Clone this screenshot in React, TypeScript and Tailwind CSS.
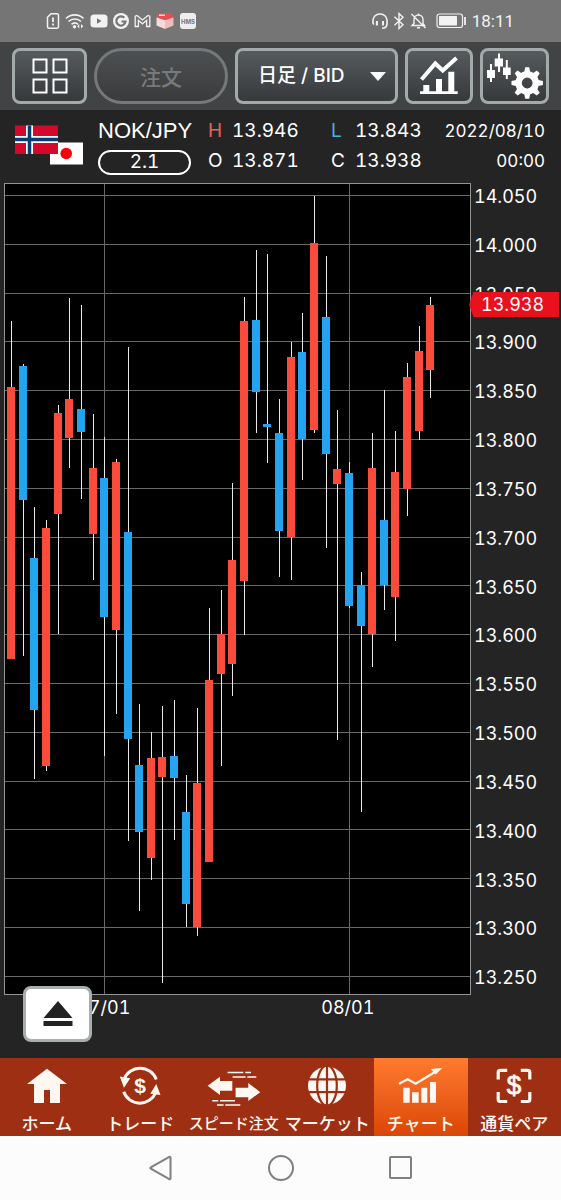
import type { ReactNode } from "react";

type Candle = [kind: "up" | "down", high: number, top: number, bottom: number, low: number];

const CANDLES: Candle[] = [
  ["up", 321, 387, 659, 659],
  ["down", 364, 366, 500, 656],
  ["down", 507, 558, 710, 779],
  ["up", 520, 528, 766, 771],
  ["up", 405, 413, 514, 634],
  ["up", 298, 399, 438, 468],
  ["down", 305, 409, 432, 499],
  ["up", 414, 468, 534, 580],
  ["down", 437, 478, 617, 756],
  ["up", 459, 462, 630, 714],
  ["down", 347, 532, 739, 841],
  ["down", 704, 765, 832, 911],
  ["up", 732, 758, 858, 880],
  ["up", 706, 757, 777, 983],
  ["down", 700, 756, 778, 840],
  ["down", 775, 812, 904, 927],
  ["up", 708, 783, 927, 936],
  ["up", 608, 680, 862, 862],
  ["up", 590, 634, 674, 766],
  ["up", 483, 560, 664, 696],
  ["up", 297, 321, 581, 635],
  ["down", 250, 320, 392, 433],
  ["down", 254, 424, 427, 463],
  ["down", 399, 433, 531, 577],
  ["up", 342, 357, 537, 580],
  ["down", 313, 352, 439, 480],
  ["up", 196, 243, 430, 433],
  ["down", 256, 317, 454, 548],
  ["up", 410, 469, 484, 740],
  ["down", 462, 473, 606, 608],
  ["down", 572, 585, 626, 812],
  ["up", 433, 468, 634, 667],
  ["down", 390, 520, 585, 610],
  ["up", 431, 472, 597, 641],
  ["up", 363, 377, 489, 516],
  ["up", 326, 351, 431, 440],
  ["up", 297, 305, 370, 398],
];

const PRICES = Array.from({ length: 17 }, (_, i) => (14.05 - i * 0.05).toFixed(3));

function StatusBar() {
  return (
    <div className="flex h-[42px] items-center justify-between bg-[#757575] pl-[46px] pr-[47px] text-[#f2f2f2]">
      <div className="flex items-center gap-[5px]">
        <svg width="14" height="18" viewBox="0 0 14 18" fill="none" stroke="currentColor" strokeWidth="1.5">
          <path d="M5 1.8h6a1.5 1.5 0 0 1 1.500 1.500v11.400a1.500 1.500 0 0 1-1.500 1.500H3a1.500 1.500 0 0 1-1.500-1.500V5.300z" />
          <path d="M7 5.500v4.500M7 11.500v2" strokeWidth="1.800" />
        </svg>
        <svg width="20" height="18" viewBox="0 0 20 18" fill="none" stroke="currentColor" strokeWidth="1.700">
          <path d="M1 6.500a12.500 12.500 0 0 1 17.500 0M3.500 9.500a9 9 0 0 1 12.500 0M6.500 12.300a5 5 0 0 1 6.500 0" />
          <circle cx="9.500" cy="14.800" r="1.700" fill="currentColor" stroke="none" />
          <path d="M14.300 12v4.500l-2-2.200zM16 12v4.500l2.300-2.200z" fill="currentColor" stroke="none" />
        </svg>
        <svg width="18" height="18" viewBox="0 0 18 18">
          <rect x="0.500" y="2.500" width="17" height="13" rx="3.500" fill="currentColor" />
          <path d="M7 6.300v5.400L11.500 9z" fill="#757575" />
        </svg>
        <svg width="16" height="18" viewBox="0 0 16 18">
          <circle cx="8" cy="9" r="8" fill="currentColor" />
          <path d="M11.300 5.800A4.600 4.600 0 1 0 12.500 9.500H8.500" fill="none" stroke="#757575" strokeWidth="2.200" />
        </svg>
        <svg width="17" height="18" viewBox="0 0 17 18" fill="none" stroke="currentColor" strokeWidth="1.300">
          <path d="M1.200 14.500V4.200l1.800-.7L8.500 8 14 3.500l1.800.7v10.300h-3.200V8.300L8.500 11.800 4.400 8.300v6.200z" />
        </svg>
        <svg width="18" height="18" viewBox="0 0 18 18">
          <path d="M1 3.500 3 1.200h12l2 2.300V6l-8 2.500L1 6z" fill="#e4504f" />
          <path d="M.5 5.500 9 8.200v8.800L.5 13.500z" fill="#f6dada" />
          <path d="M17.500 5.500 9 8.200v8.800l8.500-3.500z" fill="#eebcbc" />
          <path d="M3 3.200h6" stroke="#fff" strokeWidth="1.200" />
        </svg>
        <div className="ml-px flex size-4 items-center justify-center rounded-[3px] bg-[#eeeeee] font-['Inter',sans-serif] text-[6px] font-bold text-[#777]">
          HMS
        </div>
      </div>
      <div className="flex items-center gap-[5px]">
        <svg width="16" height="18" viewBox="0 0 16 18" fill="none" stroke="currentColor" strokeWidth="1.600">
          <path d="M1.800 12.500A5 5 0 0 1 1 9V8a6.500 6.500 0 0 1 6.500-6h1A6.500 6.500 0 0 1 15 8v3.500c0 3-1.500 4.700-5 4.700" />
          <path d="M4.900 9v4.500M11 9v4.500" strokeWidth="2" />
        </svg>
        <svg width="12" height="18" viewBox="0 0 12 18" fill="none" stroke="currentColor" strokeWidth="1.400">
          <path d="M1.500 4.800 10 12.700 6 16.500v-15l4 3.800-8.500 7.900" />
        </svg>
        <svg width="17" height="18" viewBox="0 0 17 18" fill="none" stroke="currentColor" strokeWidth="1.400">
          <path d="M2 13.500h12.500L13 11.500V7.500a4.500 4.500 0 0 0-9 0v4zM7 15.800h3M8.500 3V1.500M1.500 2 15.500 16" />
        </svg>
        <svg className="ml-1" width="31" height="16" viewBox="0 0 31 16">
          <rect x="1" y="1" width="25.500" height="13.500" rx="2.500" fill="none" stroke="currentColor" strokeWidth="1.200" />
          <rect x="3" y="3" width="18" height="9.500" rx="0.500" fill="currentColor" />
          <path d="M29 4v8" stroke="currentColor" strokeWidth="1.800" />
        </svg>
        <span className="font-['Roboto',sans-serif] text-[17px] leading-5">18:11</span>
      </div>
    </div>
  );
}

const TOOL =
  "flex h-14 items-center justify-center rounded-lg border-[3px] border-[#a3aaaa] bg-linear-to-b from-[#565b5e] to-[#37393b] text-white";

function Toolbar() {
  return (
    <div className="grid h-[68px] grid-cols-[75fr_134fr_163fr_68fr_69fr] items-center gap-[7px] bg-[#424345] pl-3 pr-3">
      <button type="button" aria-label="レイアウト" className={TOOL}>
        <svg width="36" height="36" viewBox="0 0 36 36" fill="none" stroke="currentColor" strokeWidth="2">
          <path d="M1.500 1.500h13v13h-13zM21.500 1.500h13v13h-13zM1.500 21.500h13v13h-13zM21.500 21.500h13v13h-13z" />
        </svg>
      </button>
      <button
        type="button"
        disabled
        className="flex h-14 items-center justify-center rounded-full border-[3px] border-[#75797a] bg-linear-to-b from-[#4d5052] to-[#3a3b3d] pt-1 text-[21px] font-medium text-[#77797b]"
      >
        注文
      </button>
      <div className="relative">
        <select
          aria-label="足種"
          className="h-14 w-full appearance-none rounded-lg border-[3px] border-[#a3aaaa] bg-linear-to-b from-[#565b5e] to-[#37393b] pl-5 pr-9 text-[19px] font-medium text-white"
        >
          <option>日足 / BID</option>
        </select>
        <svg className="pointer-events-none absolute right-3 top-6" width="16" height="9" viewBox="0 0 16 9">
          <path d="M0 0h16L8 9z" fill="#fff" />
        </svg>
      </div>
      <button type="button" aria-label="テクニカル" className={TOOL}>
        <svg width="42" height="42" viewBox="0 0 42 42" fill="currentColor">
          <path d="M3.500 24.500 17.300 8.500 24.700 15.500 38.500 3" fill="none" stroke="currentColor" strokeWidth="4" />
          <path d="M2 36.300h3.300V30h6v6.300H18V24h6v12.300h6.300V16.700h6v19.600h3.400V39H2z" />
        </svg>
      </button>
      <button type="button" aria-label="チャート設定" className={TOOL}>
        <svg className="shrink-0" width="60" height="48" viewBox="0 0 60 48" fill="currentColor">
          <path d="M2 18h8v8H2zM9.700 6.500H18v8H9.700zM18 15.500h7.700V23H18z" />
          <path d="M6 12v18M14 1.500V20M21.800 8v19" stroke="currentColor" strokeWidth="2" />
          <circle cx="42.200" cy="31" r="8.600" fill="none" stroke="currentColor" strokeWidth="6.400" />
          {[0, 45, 90, 135, 180, 225, 270, 315].map((a) => (
            <path key={a} d="M39 21 40.200 15.300h4L45.400 21z" transform={`rotate(${a} 42.200 31)`} />
          ))}
        </svg>
      </button>
    </div>
  );
}

function Flags() {
  return (
    <svg width="69" height="42" viewBox="0 0 69 42" role="img" aria-label="ノルウェー / 日本">
      <rect x="35" y="17.500" width="33" height="22" fill="#fff" />
      <circle cx="51.200" cy="28.500" r="5.800" fill="#fb0007" />
      <rect y="0.500" width="43" height="28.500" fill="#d3082a" />
      <path d="M14.500 .5v28.500M0 14.500h43" stroke="#fff" strokeWidth="7" />
      <path d="M14.500 .5v28.500M0 14.500h43" stroke="#0d3a72" strokeWidth="3.500" />
    </svg>
  );
}

function Quote({ label, value, tone }: { label: string; value: string; tone: string }) {
  return (
    <div className="flex h-[30px] items-center">
      <dt className={`w-6 ${tone}`}>{label}</dt>
      <dd>{value}</dd>
    </div>
  );
}

function PairInfo() {
  return (
    <div className="flex h-[73px] pl-[15px] pr-4 pt-1.5 text-[19px] text-white tabular-nums">
      <div className="w-[83px] shrink-0 pt-[9px]">
        <Flags />
      </div>
      <div className="w-[93px] shrink-0">
        <h1 className="h-[30px] whitespace-nowrap font-['Liberation_Sans',sans-serif] text-[22px] leading-[30px]">NOK/JPY</h1>
        <div className="mt-1 flex h-[25px] items-center justify-center rounded-full border-2 border-white">2.1</div>
      </div>
      <dl className="ml-[17px] w-[123px]">
        <Quote label="H" value="13.946" tone="text-[#e8635c]" />
        <Quote label="O" value="13.871" tone="text-white" />
      </dl>
      <dl>
        <Quote label="L" value="13.843" tone="text-[#45b3dc]" />
        <Quote label="C" value="13.938" tone="text-white" />
      </dl>
      <div className="ml-auto text-right text-[17px] leading-[30px]">
        <p>2022/08/10</p>
        <p>00:00</p>
      </div>
    </div>
  );
}

function Chart() {
  return (
    <div className="relative flex grow flex-col text-[18px] text-white tabular-nums">
      <div className="flex grow pl-1">
        <div className="relative min-w-0 grow">
          <svg
            className="absolute inset-0 h-full w-full"
            viewBox="4 183 467 812"
            preserveAspectRatio="none"
            shapeRendering="crispEdges"
            role="img"
            aria-label="NOK/JPY 日足"
          >
            <rect x="4" y="183" width="467" height="812" fill="#000" />
            {PRICES.map((p, i) => (
              <rect key={p} x="4" y={Math.round(195 + i * 48.800)} width="467" height="1" fill="#686868" />
            ))}
            <path d="M104.500 183v812M349.500 183v812" stroke="#686868" />
            {CANDLES.map(([kind, high, top, bottom, low], i) => {
              const x = Math.round(11 + i * 11.650);
              return (
                <g key={i}>
                  <rect x={x} y={high} width="1" height={low - high} fill="#e8e8e8" />
                  <rect x={x - 4} y={top} width="8" height={bottom - top} fill={kind === "up" ? "#fb4b3a" : "#24a3f0"} />
                </g>
              );
            })}
            <rect x="4.500" y="183.500" width="466" height="811" fill="none" stroke="#929292" />
          </svg>
        </div>
        <div className="relative -mb-[7px] -mt-[11px] flex w-[90px] shrink-0 flex-col pl-[3px]">
          {PRICES.map((p) => (
            <div key={p} className="flex h-12 grow items-center">
              {p}
            </div>
          ))}
          <div className="absolute -left-0.5 top-[120px] h-[25px] w-[90px] bg-[#e8111d] pl-3 leading-[25px] [clip-path:polygon(0_50%,5%_0,100%_0,100%_100%,5%_100%)]">
            13.938
          </div>
        </div>
      </div>
      <div className="flex h-[63px] leading-[25px]">
        <div className="w-[37%] text-center">07/01</div>
        <div className="w-1/2 text-center">08/01</div>
      </div>
      <button
        type="button"
        aria-label="パネルを開く"
        className="absolute bottom-4 left-[23px] flex h-14 w-[69px] items-center justify-center rounded-lg border-[3px] border-[#a8aeae] bg-white"
      >
        <svg width="30" height="26" viewBox="0 0 30 26" fill="#222">
          <path d="M15 0 29.500 17H.5zM.5 20h29v5H.5z" />
        </svg>
      </button>
    </div>
  );
}

function NavIcon({ children, width = 48 }: { children: ReactNode; width?: number }) {
  return (
    <svg width={width} height="42" viewBox={`0 0 ${width} 42`} fill="currentColor">
      {children}
    </svg>
  );
}

const TABS: { label: string; icon: ReactNode; small?: boolean; active?: boolean }[] = [
  {
    label: "ホーム",
    icon: (
      <NavIcon>
        <path d="M24 2.700 44 18h-7v19H27V24h-6v13H11V18H4z" />
      </NavIcon>
    ),
  },
  {
    label: "トレード",
    icon: (
      <NavIcon>
        <path d="M8 13.500A17.200 17.200 0 0 1 40.300 13.500M7.700 25.700A17.200 17.200 0 0 0 39.800 26.500" fill="none" stroke="currentColor" strokeWidth="3" />
        <path d="M3.800 10.500 14.200 12.300 8 21.700zM40.300 18 44.500 29 34.300 27.700z" />
        <text x="24" y="26.800" textAnchor="middle" className="font-['Liberation_Sans',sans-serif] text-[21px] font-bold">$</text>
      </NavIcon>
    ),
  },
  {
    label: "スピード注文",
    small: true,
    icon: (
      <NavIcon width={54}>
        <path d="M.6 19.700 13 10.700V15h12.300v9.700H13V29zM53.300 26.200 41.300 17v4.700H28.600v9.600h12.700V35z" />
        <path
          d="M20.600 6.500H36.300M38.300 6.500H44M25.600 11H38.600M40.300 11h9M5.300 34.700h6M13 34.700h15M10 39h6.600M18.300 39h15"
          stroke="currentColor"
          strokeWidth="1.500"
        />
      </NavIcon>
    ),
  },
  {
    label: "マーケット",
    icon: (
      <NavIcon>
        <circle cx="24" cy="19.700" r="19" />
        <g fill="none" stroke="#9f2f13" strokeWidth="2.200">
          <path d="M24 0v40M4 13.300h40M4 26.100h40" />
          <ellipse cx="24" cy="19.700" rx="9.800" ry="20" />
        </g>
      </NavIcon>
    ),
  },
  {
    label: "チャート",
    active: true,
    icon: (
      <NavIcon>
        <path d="M6.300 21.700h6.400v15H6.300zM15 26.300h6.700v10.400H15zM24.300 21.700h6v15h-6zM33 16h6v20.700h-6z" />
        <path d="M2 17.700 10.700 13.300 18.700 17.700 38 6" fill="none" stroke="currentColor" strokeWidth="2.400" />
        <path d="M33.700 3 45.300 2 38.700 8.500z" />
      </NavIcon>
    ),
  },
  {
    label: "通貨ペア",
    icon: (
      <NavIcon>
        <path
          d="M8.200 13.500V6.300a2 2 0 0 1 2-2h7M30.800 4.300h7a2 2 0 0 1 2 2v7.200M39.800 26v7.500a2 2 0 0 1-2 2h-7M17.200 35.500h-7a2 2 0 0 1-2-2V26"
          fill="none"
          stroke="currentColor"
          strokeWidth="3.200"
        />
        <text
          x="24"
          y="28.300"
          textAnchor="middle"
          stroke="currentColor"
          strokeWidth="0.800"
          className="font-['Liberation_Sans',sans-serif] text-[26px]"
        >
          $
        </text>
      </NavIcon>
    ),
  },
];

function TabBar() {
  return (
    <nav className="grid h-[78px] grid-cols-6 bg-[#9f2f13] text-[#fff8f2]">
      {TABS.map((tab) => (
        <a
          key={tab.label}
          href="#"
          aria-current={tab.active ? "page" : undefined}
          className={`flex flex-col items-center whitespace-nowrap pt-2 font-medium ${
            tab.active ? "bg-linear-to-b from-[#ff7a2e] to-[#d94300]" : ""
          }`}
        >
          {tab.icon}
          <span className={`leading-8 ${tab.small ? "text-[15px]" : "text-[17px]"}`}>{tab.label}</span>
        </a>
      ))}
    </nav>
  );
}

function SystemNav() {
  const icon = "size-[26px] fill-none stroke-[#808080] stroke-2";
  return (
    <div className="flex h-16 items-center justify-center gap-[94px] bg-[#fcfcfc]">
      <button type="button" aria-label="戻る">
        <svg className={icon} viewBox="0 0 26 26">
          <path d="M22.500 2.500v21a.8.8 0 0 1-1.200.7L2.800 13.700a.8.800 0 0 1 0-1.400L21.300 1.800a.8.800 0 0 1 1.200.7z" />
        </svg>
      </button>
      <button type="button" aria-label="ホーム画面">
        <svg className={icon} viewBox="0 0 26 26">
          <circle cx="13" cy="13" r="12" />
        </svg>
      </button>
      <button type="button" aria-label="アプリ履歴">
        <svg className={icon} viewBox="0 0 26 26">
          <rect x="2" y="2" width="21" height="21" rx="1" />
        </svg>
      </button>
    </div>
  );
}

export default function App() {
  return (
    <div className="flex min-h-screen flex-col bg-[#242424] font-['Inter','Noto_Sans_CJK_JP',sans-serif]">
      <StatusBar />
      <Toolbar />
      <PairInfo />
      <Chart />
      <TabBar />
      <SystemNav />
    </div>
  );
}
